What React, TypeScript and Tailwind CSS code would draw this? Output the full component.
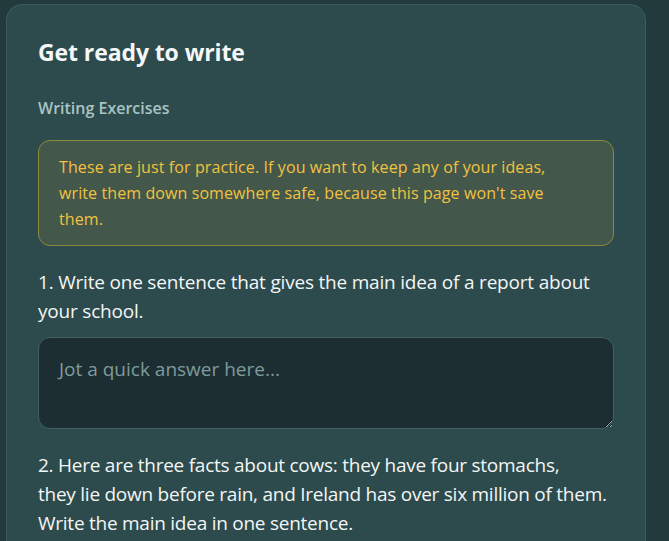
export default function App() {
  return (
    <div className="min-h-screen bg-[#223a3c] pl-[6px] pr-[23px] pt-[4px] font-['Open_Sans','Noto_Sans',sans-serif] overflow-hidden h-[541px]">
      <div className="rounded-[16px] border border-[#3d5c5e] bg-[#2d4a4c] px-[31px] pt-[31px] pb-10">
        <h2 className="text-[23px] leading-[32px] font-bold text-[#f4f7f7] tracking-[-0.1px]">Get ready to write</h2>
        <h3 className="mt-[30px] text-[16px] leading-[20px] font-semibold text-[#a8c4c4]">Writing Exercises</h3>

        <div className="mt-[22px] rounded-[12px] border border-[#8c8a3c] bg-[#43584b] pl-[20px] pr-[48px] pt-[13px] pb-[13px]">
          <p className="text-[16px] leading-[26px] text-[#f2c23f] tracking-[0.1px]">
            These are just for practice. If you want to keep any of your ideas, write them down somewhere safe, because this page won't save them.
          </p>
        </div>

        <div className="mt-[22px]">
          <p className="text-[19px] leading-[29px] text-[#f3f6f6] tracking-[-0.2px]">
            1. Write one sentence that gives the main idea of a report about your school.
          </p>
          <textarea
            className="mt-[11px] block w-full h-[92px] rounded-[12px] border border-[#40605f] bg-[#1c2e32] px-[20px] pt-[18px] pb-[10px] text-[19px] leading-[26px] text-[#f3f6f6] placeholder:text-[#7f9b9a] outline-none resize-y"
            placeholder="Jot a quick answer here..."
          />
        </div>

        <div className="mt-[22px]">
          <p className="text-[19px] leading-[29px] text-[#f3f6f6] tracking-[-0.25px]">
            2. Here are three facts about cows: they have four stomachs,<br />
            they lie down before rain, and Ireland has over six million of them. Write the main idea in one sentence.
          </p>
        </div>
      </div>
    </div>
  );
}
